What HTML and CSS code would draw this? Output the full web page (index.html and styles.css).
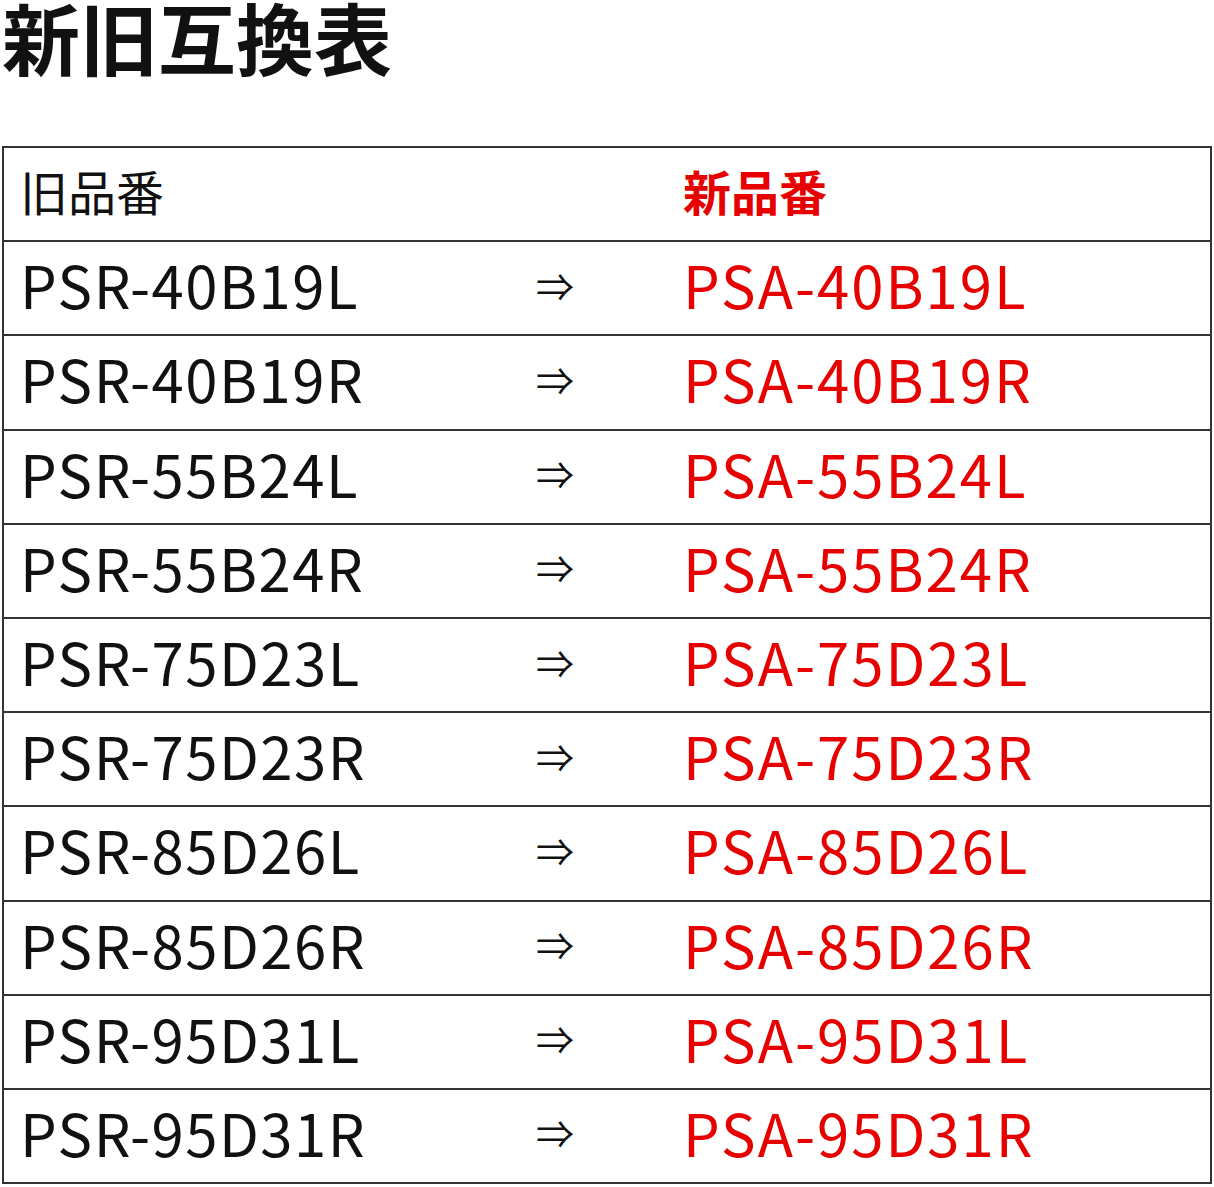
FILE: index.html
```html
<!DOCTYPE html>
<html lang="ja">
<head>
<meta charset="utf-8">
<link rel="stylesheet" href="styles.css">
</head>
<body>
<h1 class="title">新旧互換表</h1>
<table class="swap">
  <thead>
    <tr><th class="old">旧品番</th><th class="arrow"></th><th class="new">新品番</th></tr>
  </thead>
  <tbody>
    <tr><td class="old">PSR-40B19L</td><td class="arrow">⇒</td><td class="new">PSA-40B19L</td></tr>
    <tr><td class="old">PSR-40B19R</td><td class="arrow">⇒</td><td class="new">PSA-40B19R</td></tr>
    <tr><td class="old">PSR-55B24L</td><td class="arrow">⇒</td><td class="new">PSA-55B24L</td></tr>
    <tr><td class="old">PSR-55B24R</td><td class="arrow">⇒</td><td class="new">PSA-55B24R</td></tr>
    <tr><td class="old">PSR-75D23L</td><td class="arrow">⇒</td><td class="new">PSA-75D23L</td></tr>
    <tr><td class="old">PSR-75D23R</td><td class="arrow">⇒</td><td class="new">PSA-75D23R</td></tr>
    <tr><td class="old">PSR-85D26L</td><td class="arrow">⇒</td><td class="new">PSA-85D26L</td></tr>
    <tr><td class="old">PSR-85D26R</td><td class="arrow">⇒</td><td class="new">PSA-85D26R</td></tr>
    <tr><td class="old">PSR-95D31L</td><td class="arrow">⇒</td><td class="new">PSA-95D31L</td></tr>
    <tr><td class="old">PSR-95D31R</td><td class="arrow">⇒</td><td class="new">PSA-95D31R</td></tr>
  </tbody>
</table>
</body>
</html>
```
FILE: styles.css
```css
html, body {
  margin: 0;
  padding: 0;
  background: #fff;
}
body {
  font-family: "Noto Sans CJK JP", "Noto Sans", sans-serif;
  color: #111;
}
.title {
  margin: 0 0 0 2px;
  font-size: 78px;
  line-height: 72px;
  font-weight: 700;
  height: 146px;
  padding-top: 0;
  box-sizing: border-box;
}
.swap {
  margin-left: 2px;
  width: 1210px;
  border-collapse: collapse;
  border: 2px solid #333;
  table-layout: fixed;
}
.swap th, .swap td {
  height: 84.2px;
  padding: 0 0 8px 0;
  border-top: 2px solid #333;
  border-bottom: 2px solid #333;
  text-align: left;
  vertical-align: middle;
  white-space: nowrap;
}
.swap th {
  font-size: 48px;
  font-weight: 400;
}
.swap td {
  font-size: 58px;
  font-weight: 400;
  letter-spacing: 1.5px;
}
.swap .old {
  width: 516px;
  padding-left: 16px;
}
.swap .arrow {
  width: 147px;
  font-size: 38px;
  letter-spacing: 0;
}
.new {
  color: #e60000;
}
.swap td.new {
  letter-spacing: 2px;
}
.swap th.new {
  font-weight: 700;
}
```
